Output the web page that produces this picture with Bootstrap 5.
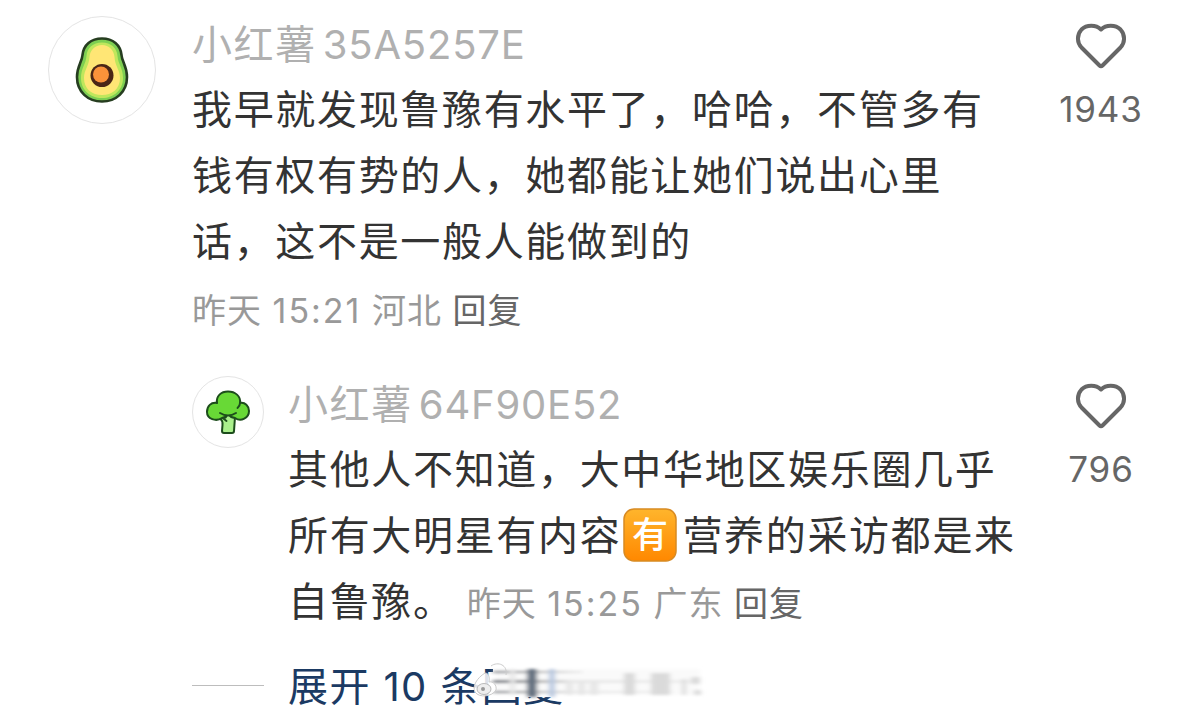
<!DOCTYPE html>
<html lang="zh-CN">
<head>
    <meta charset="utf-8">
    <meta name="viewport" content="width=device-width, initial-scale=1">
    <title>评论</title>
    <link href="https://cdn.jsdelivr.net/npm/bootstrap@5.3.0/dist/css/bootstrap.min.css" rel="stylesheet">
    <style>
        body {
            font-family: Inter, "Noto Sans CJK SC", sans-serif;
            color: #333;
            overflow: hidden;
        }
        .comments { width: 1179px; height: 710px; padding: 16px 27px 0 48px; }
        .comment { height: 360px; }
        .reply { height: 276px; padding-left: 144px; }
        .avatar {
            width: 108px;
            height: 108px;
            border: 1px solid #e4e4e4;
            margin-right: 36px;
        }
        .avatar-sm { width: 72px; height: 72px; margin-right: 24px; }
        .user-name {
            height: 61px;
            line-height: 58px;
            font-size: 40px;
            letter-spacing: 1.6px;
            color: #b0b0b0;
        }
        .user-name span { letter-spacing: .8px; margin-left: 6px; }
        .content { font-size: 40px; line-height: 66px; letter-spacing: 1.67px; }
        .meta { font-size: 34px; line-height: 66px; letter-spacing: 1px; color: #999; }
        .meta span { letter-spacing: 2px; }
        .meta a { color: #666; text-decoration: none; }
        .posted { padding-top: 3px; }
        .inline-meta { margin-left: 12px; }
        .likes { width: 102px; color: #666; }
        .likes svg { margin-top: 6px; }
        .likes span { font-size: 35px; line-height: 44px; margin-top: 15px; letter-spacing: .8px; }
        .emoji-have { width: 54px; height: 54px; margin: -8px 5px 0 2px; }
        .expand { height: 66px; color: #1b3a63; font-size: 40px; line-height: 66px; letter-spacing: 1.4px; }
        .expand hr { width: 72px; margin: 0 24px 0 144px; color: #999; opacity: .65; }
        .expand-link { padding-top: 3px; }
        .smudge { left: 184px; top: 10px; }
    </style>
</head>
<body class="bg-white">
<div class="comments">
    <div class="comment d-flex align-items-start">
        <div class="avatar rounded-circle flex-shrink-0">
            <svg width="106" height="106" viewBox="0 0 106 106">
                <path d="M53 21.500C42 21.500 34.500 28 33.500 38C33 45 28 49 28 60C28 75 39 84.500 53 84.500S78 75 78 60C78 49 73 45 72.500 38C71.500 28 64 21.500 53 21.500Z" fill="#7dcf52" stroke="#263d20" stroke-width="2.600"/>
                <path d="M53 25.500C44 25.500 38 31 37.500 39C37 47 32 51 32 61C32 73 41 81 53 81S74 73 74 61C74 51 69 47 68.500 39C68 31 62 25.500 53 25.500Z" fill="#bfe75c"/>
                <path d="M53 28C46 28 41 33 40.500 40C40 49 35 53 35 61C35 72 43 78 53 78S71 72 71 61C71 53 66 49 65.500 40C65 33 60 28 53 28Z" fill="#ffe675"/>
                <circle cx="53" cy="58.500" r="11.500" fill="#4a2616"/>
                <circle cx="52" cy="57.500" r="8" fill="#fa923a"/>
            </svg>
        </div>
        <div class="flex-grow-1 text-nowrap">
            <div class="user-name">小红薯<span>35A5257E</span></div>
            <div class="content">我早就发现鲁豫有水平了，哈哈，不管多有<br>钱有权有势的人，她都能让她们说出心里<br>话，这不是一般人能做到的</div>
            <div class="meta posted">昨天 <span>15:21</span> 河北 <a href="#">回复</a></div>
        </div>
        <div class="likes d-flex flex-column align-items-center flex-shrink-0">
            <svg width="54" height="50" viewBox="0 0 54 50" fill="none" stroke="#666" stroke-width="4" stroke-linejoin="round">
                <path d="M27 7.500C22 2.500 12.500 2.500 7.500 7.500C2.500 13 3 20.500 7.500 25.500L25.500 43.500Q27 45 28.500 43.500L46.500 25.500C51 20.500 51.500 13 46.500 7.500C41.500 2.500 32 2.500 27 7.500Z"/>
            </svg>
            <span>1943</span>
        </div>
    </div>

    <div class="reply d-flex align-items-start">
        <div class="avatar avatar-sm rounded-circle flex-shrink-0">
            <svg width="70" height="70" viewBox="0 0 70 70" stroke="#1d4d1c" stroke-width="2" stroke-linejoin="round" stroke-linecap="round">
                <path d="M27 41Q30 44 29.500 48L29 54Q29 56 31 56H39Q41 56 41 54L42 40Z" fill="#aaf08c"/>
                <path d="M24 26C23 19 28 14.500 35 14.500S48 19 47 26C52 25 56 29 56 34C56 41 48 45 42 41L35 39L29 41C23 45 14 42 14 35C14 29 18 25 24 26Z" fill="#68d936"/>
                <path d="M31.500 44L35 38.500L40 43V49H33Z" fill="#aaf08c" stroke="none"/>
                <path d="M27 36Q35 41 43 36M47 26Q47 29 44.500 31M31 42L33.500 44" fill="none"/>
            </svg>
        </div>
        <div class="flex-grow-1 text-nowrap">
            <div class="user-name">小红薯<span>64F90E52</span></div>
            <div class="content">其他人不知道，大中华地区娱乐圈几乎<br>所有大明星有内容<svg class="emoji-have" viewBox="0 0 54 54">
                    <defs>
                        <linearGradient id="orange" x2="0" y2="1">
                            <stop stop-color="#ffb52c"/>
                            <stop offset="1" stop-color="#ff8800"/>
                        </linearGradient>
                    </defs>
                    <rect x="1" y="1" width="52" height="52" rx="10" fill="url(#orange)" stroke="#d88a22" stroke-width="1.500"/>
                    <text x="27" y="40" font-size="36" font-weight="500" text-anchor="middle" letter-spacing="0" fill="#fff">有</text>
                </svg>营养的采访都是来<br>自鲁豫。<span class="meta inline-meta">昨天 <span>15:25</span> 广东 <a href="#">回复</a></span></div>
        </div>
        <div class="likes d-flex flex-column align-items-center flex-shrink-0">
            <svg width="54" height="50" viewBox="0 0 54 50" fill="none" stroke="#666" stroke-width="4" stroke-linejoin="round">
                <path d="M27 7.500C22 2.500 12.500 2.500 7.500 7.500C2.500 13 3 20.500 7.500 25.500L25.500 43.500Q27 45 28.500 43.500L46.500 25.500C51 20.500 51.500 13 46.500 7.500C41.500 2.500 32 2.500 27 7.500Z"/>
            </svg>
            <span>796</span>
        </div>
    </div>

    <div class="expand d-flex align-items-center text-nowrap">
        <hr>
        <div class="expand-link position-relative">展开 10 条回复
            <!-- blurred strip over the end of the link -->
            <svg class="smudge position-absolute" width="240" height="42" viewBox="0 0 240 42">
                <defs>
                    <filter id="soft" x="-20%" y="-20%" width="140%" height="140%"><feGaussianBlur stdDeviation="2.500 1.500"/></filter>
                    <linearGradient id="fade" gradientUnits="userSpaceOnUse" x1="21" x2="226">
                        <stop stop-color="#555b66"/>
                        <stop offset=".2" stop-color="#aaa"/>
                        <stop offset=".4" stop-color="#e6e6e6"/>
                        <stop offset="1" stop-color="#eee"/>
                    </linearGradient>
                </defs>
                <rect x="21" y="2" width="212" height="34" fill="#fff"/>
                <g filter="url(#soft)">
                    <rect x="23" y="8" width="205" height="26" fill="#fafafa"/>
                    <path d="M21 10H110V12H21ZM21 19H226V22H21ZM21 30H200V32H21Z" fill="url(#fade)"/>
                    <rect x="55" y="8" width="10" height="28" fill="#63707f"/>
                    <rect x="77" y="8" width="6" height="28" fill="#b8c8e0"/>
                    <path d="M38 8h5v26h-5ZM94 20h7v14h-7ZM106 20h7v14h-7ZM118 20h8v14h-8Z" fill="#e6e6e6"/>
                    <path d="M152 12h11v22h-11ZM179 12h19v22h-19ZM210 18h4v16h-4ZM219 16h9v7h-9ZM222 29h7v5h-7Z" fill="#dadada"/>
                </g>
                <path d="M13 12C5 17 0 25 3 31C7 37 20 36 24 29C25 24 21 20 17 21C18 15 16 12 13 12Z" fill="#fff" fill-opacity=".85" stroke="#ccc"/>
                <ellipse cx="12" cy="28" rx="7" ry="5.500" fill="#eee" stroke="#bbb"/>
                <circle cx="11" cy="28" r="2" fill="#999"/>
                <path d="M19 5C26 0 36 4 34 14" fill="none" stroke="#ccc"/>
            </svg>
        </div>
    </div>
</div>
<script src="https://cdn.jsdelivr.net/npm/bootstrap@5.3.0/dist/js/bootstrap.bundle.min.js"></script>
</body>
</html>
